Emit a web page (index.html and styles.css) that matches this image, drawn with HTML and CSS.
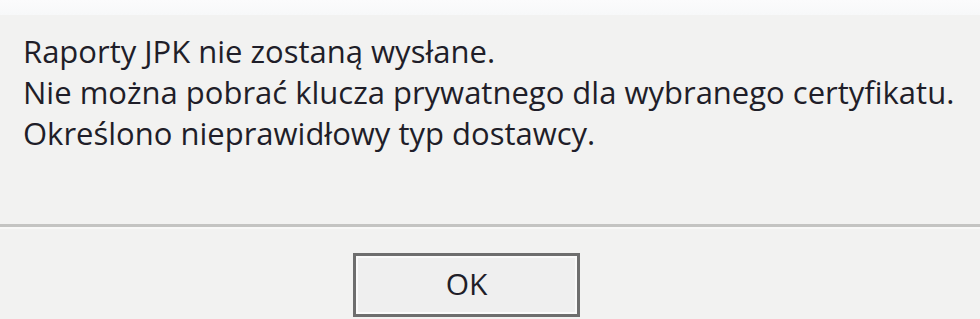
FILE: index.html
```html
<!DOCTYPE html>
<html lang="pl">
<head>
    <meta charset="UTF-8">
    <meta name="viewport" content="width=device-width, initial-scale=1.0">
    <title>Raporty JPK</title>
    <link rel="stylesheet" href="styles.css">
</head>
<body>

    <div class="dialog">
        <div class="top-strip"></div>
        <div class="message">
            <p>Raporty JPK nie zostaną wysłane.</p>
            <p>Nie można pobrać klucza prywatnego dla wybranego certyfikatu.</p>
            <p>Określono nieprawidłowy typ dostawcy.</p>
        </div>
        <div class="separator"></div>
        <div class="buttons">
            <button type="button" class="ok-button">OK</button>
        </div>
    </div>

</body>
</html>
```

FILE: styles.css
```css
body {
    margin: 0;
    background-color: #f2f2f1;
    font-family: "Open Sans", Arial, sans-serif;
    color: #1f1e29;
    overflow: hidden;
}
.dialog {
    width: 980px;
    height: 319px;
}
.top-strip {
    height: 15px;
    background: linear-gradient(#fbfbfc, #f7f8f9);
}
.message {
    padding: 16px 0 0 23px;
    height: 189px;
    box-sizing: border-box;
}
.message p {
    margin: 0;
    font-size: 31px;
    font-weight: 500;
    line-height: 41px;
    white-space: nowrap;
}
.separator {
    height: 3px;
    margin-top: 20px;
    background-color: #c4c4c2;
    border-bottom: 2px solid #f8f8f7;
}
.buttons {
    padding-top: 24px;
    padding-left: 353px;
}
.ok-button {
    width: 227px;
    height: 64px;
    border: 3px solid #6e6e6e;
    box-shadow: inset 0 0 0 2px #fafafa;
    background-color: #efefef;
    font-family: "Open Sans", Arial, sans-serif;
    font-size: 30px;
    font-weight: 500;
    color: #1f1e29;
    padding: 0 0 4px;
}
```
